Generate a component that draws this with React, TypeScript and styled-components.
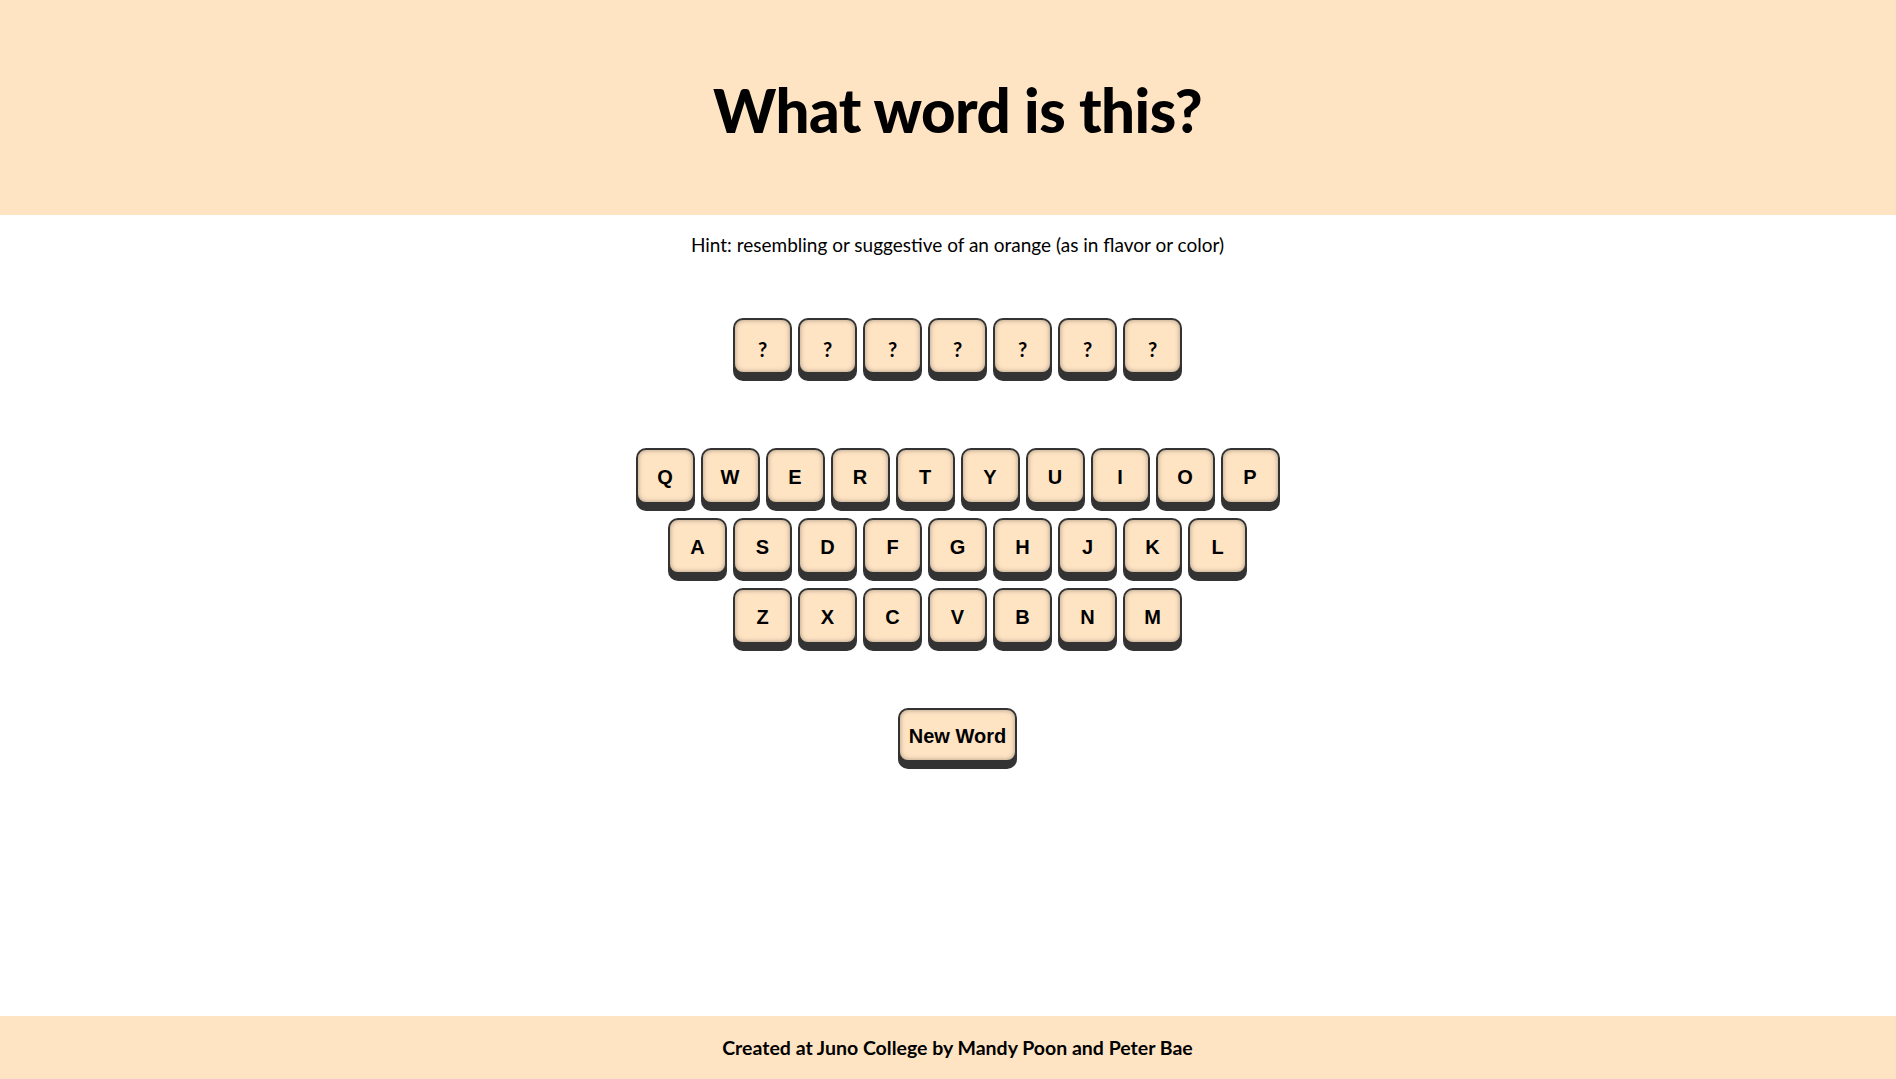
import React from 'react';
import styled, { createGlobalStyle } from 'styled-components';

const GlobalStyle = createGlobalStyle`
  body {
    margin: 0;
    font-family: Lato, "Open Sans", sans-serif;
    color: #000;
    background: #fff;
  }
`;

const Page = styled('div')`
  display: flex;
  flex-direction: column;
  min-height: 100vh;
`;

const Header = styled('header')`
  display: flex;
  align-items: center;
  justify-content: center;
  height: 215px;
  padding-left: 19px;
  background-color: bisque;
`;

const Title = styled('h1')`
  margin: 4px 0 0;
  font-size: 60px;
  font-weight: 900;
  letter-spacing: -0.5px;
`;

const Main = styled('main')`
  flex: 1;
  display: flex;
  flex-direction: column;
  align-items: center;
  padding-left: 19px;
`;

const Hint = styled('p')`
  margin: 18px 0 0;
  font-size: 19px;
  line-height: 24px;
`;

const Row = styled('div')<{ $top?: number }>`
  display: flex;
  justify-content: center;
  gap: 6px;
  margin-top: ${(p) => p.$top ?? 0}px;
`;

const Keyboard = styled('div')`
  display: flex;
  flex-direction: column;
  gap: 14px;
  margin-top: 74px;
`;

const Key = styled('button')<{ $tile?: boolean }>`
  box-sizing: border-box;
  display: flex;
  align-items: center;
  justify-content: center;
  width: 59px;
  height: 56px;
  padding: ${(p) => (p.$tile ? '5px 0 0' : '3px 0 0')};
  border: 2px solid #333;
  border-radius: 10px;
  background-color: bisque;
  box-shadow: 0 7px 0 #333, inset 0 0 5px rgba(0, 0, 0, 0.35);
  color: #000;
  font-family: ${(p) => (p.$tile ? 'Lato, sans-serif' : '"Liberation Sans", Arial, sans-serif')};
  font-size: 20px;
  font-weight: bold;
  cursor: pointer;
`;

const NewWord = styled(Key)`
  width: 119px;
  height: 54px;
  margin-top: 64px;
`;

const Footer = styled('footer')`
  display: flex;
  align-items: center;
  justify-content: center;
  height: 63px;
  padding-left: 19px;
  background-color: bisque;
  font-size: 19.5px;
  font-weight: bold;
`;

const rows = ['QWERTYUIOP', 'ASDFGHJKL', 'ZXCVBNM'];

export default function App() {
  const word = 'orangey';
  return (
    <Page>
      <GlobalStyle />
      <Header>
        <Title>What word is this?</Title>
      </Header>
      <Main>
        <Hint>Hint: resembling or suggestive of an orange (as in flavor or color)</Hint>
        <Row $top={61}>
          {word.split('').map((_, i) => (
            <Key as="div" $tile key={i}>?</Key>
          ))}
        </Row>
        <Keyboard>
          {rows.map((row) => (
            <Row key={row}>
              {row.split('').map((letter) => (
                <Key key={letter}>{letter}</Key>
              ))}
            </Row>
          ))}
        </Keyboard>
        <NewWord>New Word</NewWord>
      </Main>
      <Footer>Created at Juno College by Mandy Poon and Peter Bae</Footer>
    </Page>
  );
}
